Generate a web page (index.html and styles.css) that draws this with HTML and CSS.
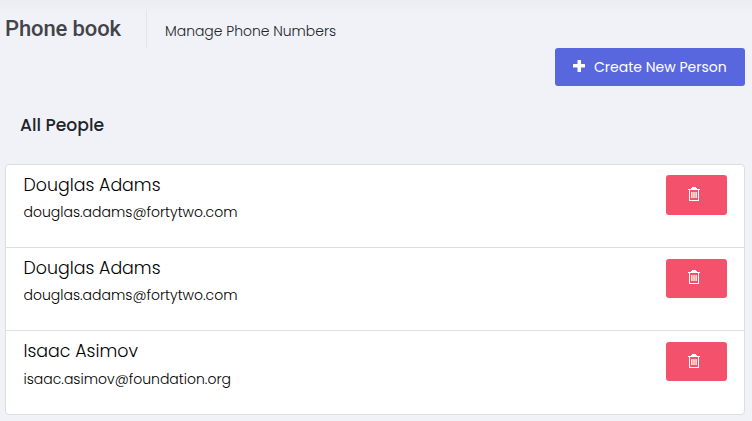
FILE: index.html
```
<!DOCTYPE html>
<html lang="en">
<head>
<meta charset="utf-8">
<title>Phone book</title>
<link rel="stylesheet" href="styles.css">
</head>
<body>
<header class="subheader">
  <h1 class="title">Phone book</h1>
  <span class="separator"></span>
  <span class="subtitle">Manage Phone Numbers</span>
</header>
<div class="toolbar">
  <button class="btn btn-create"><svg class="plus" viewBox="0 0 12 12"><path d="M5 0h2.500q.5 0 .5.500V4h3.500q.5 0 .5.500v2.500q0 .5-.5.500H8v4q0 .5-.5.500H5q-.5 0-.5-.5v-4h-4Q0 7.500 0 7V4.500Q0 4 .5 4h4V.5Q4.500 0 5 0z"/></svg><span>Create New Person</span></button>
</div>
<main>
  <h2 class="section-title">All People</h2>
  <ul class="people">
    <li class="person">
      <div class="info"><h3 class="name">Douglas Adams</h3><p class="email">douglas.adams@fortytwo.com</p></div>
      <button class="btn btn-delete" aria-label="Delete"><svg class="trash" viewBox="0 0 12 14"><path d="M4 0h4v1h1v1h3v1H0V2h3V1h1zM1 3h1v10H1zM10 3h1v10h-1zM1 13h10v1H1z"/><path class="bars" d="M3 5h6v6H3z"/><path class="gaps" d="M4 5h.6v6H4zM5.700 5h.6v6h-.6zM7.400 5h.6v6h-.6z"/></svg></button>
    </li>
    <li class="person">
      <div class="info"><h3 class="name">Douglas Adams</h3><p class="email">douglas.adams@fortytwo.com</p></div>
      <button class="btn btn-delete" aria-label="Delete"><svg class="trash" viewBox="0 0 12 14"><path d="M4 0h4v1h1v1h3v1H0V2h3V1h1zM1 3h1v10H1zM10 3h1v10h-1zM1 13h10v1H1z"/><path class="bars" d="M3 5h6v6H3z"/><path class="gaps" d="M4 5h.6v6H4zM5.700 5h.6v6h-.6zM7.400 5h.6v6h-.6z"/></svg></button>
    </li>
    <li class="person">
      <div class="info"><h3 class="name">Isaac Asimov</h3><p class="email">isaac.asimov@foundation.org</p></div>
      <button class="btn btn-delete" aria-label="Delete"><svg class="trash" viewBox="0 0 12 14"><path d="M4 0h4v1h1v1h3v1H0V2h3V1h1zM1 3h1v10H1zM10 3h1v10h-1zM1 13h10v1H1z"/><path class="bars" d="M3 5h6v6H3z"/><path class="gaps" d="M4 5h.6v6H4zM5.700 5h.6v6h-.6zM7.400 5h.6v6h-.6z"/></svg></button>
    </li>
  </ul>
</main>
</body>
</html>
```
FILE: styles.css
```
* { box-sizing: border-box; margin: 0; padding: 0; }
body {
  height: 421px;
  padding: 10px 7px 0 5px;
  overflow: hidden;
  background: #f1f2f8 linear-gradient(#ecedf3, #f1f2f8) no-repeat 0 0 / 100% 14px;
  font-family: Poppins, Inter, sans-serif;
  font-weight: 300;
  color: #000;
}
.subheader { display: flex; align-items: center; height: 38px; }
.title { width: 116px; font: 500 22px/36px Roboto, sans-serif; letter-spacing: -0.12px; white-space: nowrap; color: #434349; }
.separator { width: 1px; height: 38px; margin: 0 18px 0 25px; background: #e3e4ec; }
.subtitle { font-size: 13.950px; line-height: 22px; margin-top: 4px; color: #212529; }
.toolbar { display: flex; justify-content: flex-end; }
.btn { display: flex; align-items: center; border: 0; border-radius: 3px; font: inherit; }
.btn-create { width: 190px; height: 38px; padding-left: 18px; background: #5867dd; color: #fff; font-size: 14px; font-weight: 400; white-space: nowrap; }
.plus { width: 12px; height: 12px; margin: 0 9px 2px 0; fill: #fff; }
.section-title { margin: 26px 0 0 15px; font-size: 17.200px; font-weight: 500; line-height: 26px; color: #212529; }
.people { list-style: none; margin-top: 26px; height: 251px; border: 1px solid #dedede; border-radius: 4px; background: #fff; }
.person { display: flex; justify-content: space-between; align-items: flex-start; height: 83px; padding: 10px 17px 0 17.500px; }
.person + .person { border-top: 1px solid #dedede; }
.person:first-child { height: 82px; }
.name { font-size: 17.400px; font-weight: 300; line-height: 20px; }
.email { margin-top: 7px; font-size: 14px; line-height: 20px; }
.person:last-child .email { margin-top: 8px; }
.btn-delete { width: 61px; height: 40px; padding-left: 22px; background: #f4516c; }
.person + .person .btn-delete { margin-top: 1px; height: 39px; }
.trash { width: 12px; height: 14px; fill: #fff; margin-bottom: 2px; }
.person + .person .trash { margin-bottom: 3px; }
.person + .person:last-child .trash { margin-bottom: 1px; }
.bars { fill: #ffe6d8; }
.gaps { fill: #f78a90; }
```
